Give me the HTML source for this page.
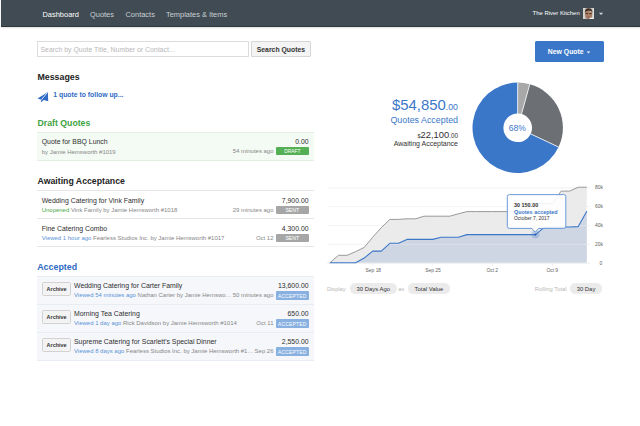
<!DOCTYPE html>
<html><head><meta charset="utf-8">
<style>
html,body{margin:0;padding:0;background:#fff;width:640px;height:426px;overflow:hidden;position:relative;font-family:"Liberation Sans",sans-serif;}
.t{position:absolute;white-space:nowrap;line-height:1;}
.b{font-weight:bold;}
#hdr{position:absolute;left:1px;top:0;width:639px;height:26px;background:#404b53;border-bottom:1px solid #2d373e;box-shadow:0 1px 1.5px rgba(0,0,0,0.12);}
.nav{color:#c9d0d4;font-size:7.45px;}
.box{position:absolute;}
.row{position:absolute;left:37px;width:276px;height:28px;}
.ttl{font-size:6.9px;color:#2e2e2e;}
.sub{font-size:5.97px;color:#878787;}
.amt{font-size:6.85px;color:#2e2e2e;text-align:right;}
.badge{position:absolute;left:276px;width:32.6px;height:8px;border-radius:1px;color:#fff;font-size:4.9px;text-align:center;line-height:8.3px;}
.arch{position:absolute;left:41.9px;width:29.4px;height:14px;border:0.8px solid #d2d2d2;background:#f3f3f3;border-radius:1.5px;box-sizing:border-box;font-size:5.45px;font-weight:bold;color:#333;text-align:center;line-height:13px;}
.pill{position:absolute;height:10.5px;border-radius:5.25px;background:#ebebeb;color:#333;font-size:5.9px;text-align:center;line-height:12.2px;}
.ax{font-size:4.9px;color:#5e5e5e;}
</style></head><body>
<div id="hdr"></div>
<div class="t nav" style="left:42.5px;top:11px;color:#fff">Dashboard</div>
<div class="t nav" style="left:90px;top:11px">Quotes</div>
<div class="t nav" style="left:125.5px;top:11px">Contacts</div>
<div class="t nav" style="left:166px;top:11px">Templates &amp; Items</div>
<div class="t" style="left:532.5px;top:10.5px;font-size:5.95px;color:#fff">The River Kitchen</div>
<svg class="box" style="left:582.9px;top:7.7px" width="11.5" height="11.2" viewBox="0 0 11.5 11.2"><rect width="11.5" height="11.2" fill="#bdbab3"/><rect x="0" y="0" width="2" height="11.2" fill="#d6d4ce"/><rect x="9.6" y="0" width="1.9" height="11.2" fill="#e0ded8"/><ellipse cx="5.6" cy="6.4" rx="3.5" ry="4.6" fill="#a97c64"/><path d="M1.8,5 Q1.6,0.2 5.6,0.2 Q9.6,0.2 9.4,5 Q8.8,2.2 5.8,2.4 Q2.6,2.4 1.8,5Z" fill="#3b2a22"/><rect x="2.6" y="5" width="2.2" height="1.1" fill="#4a3428"/><rect x="6.4" y="5" width="2.2" height="1.1" fill="#4a3428"/><ellipse cx="7.4" cy="3.8" rx="1.1" ry="0.8" fill="#d8b8a0"/><ellipse cx="5.6" cy="9" rx="1.6" ry="0.6" fill="#8a5a48"/><rect x="6.5" y="9.8" width="4" height="1.4" fill="#f2f2f2"/></svg>


<!-- search -->
<div class="box" style="left:37px;top:41px;width:211.6px;height:15.5px;border:1px solid #dcdcdc;box-sizing:border-box;background:#fff"></div>
<div class="t" style="left:40.5px;top:47.1px;font-size:6.9px;color:#b8b8b8">Search by Quote Title, Number or Contact…</div>
<div class="box" style="left:251px;top:41px;width:60px;height:15.5px;border:1px solid #d6d6d6;box-sizing:border-box;background:#f4f4f4;border-radius:1px"></div>
<div class="t b" style="left:256.7px;top:46.8px;font-size:6.86px;color:#333">Search Quotes</div>

<!-- new quote -->
<div class="box" style="left:535px;top:41px;width:68.5px;height:20.5px;background:#3b77c9;border-radius:1.5px"></div>
<div class="t b" style="left:547.8px;top:49.2px;font-size:6.87px;color:#fff">New Quote</div>
<svg class="box" style="left:0;top:0" width="640" height="70" viewBox="0 0 640 70"><polygon points="586.8,51.4 590.2,51.4 588.5,53.5" fill="#fff"/><polygon points="598.9,12.8 603.2,12.8 601.05,14.9" fill="#d0d5d8"/></svg>

<!-- messages -->
<div class="t b" style="left:37.5px;top:73px;font-size:8.8px;color:#222">Messages</div>
<svg class="box" style="left:0;top:0" width="60" height="110" viewBox="0 0 60 110"><path d="M47.9,91.9 L37.6,98.5 L41.2,99.7 L40.8,102.4 L43.7,100.1 L48.2,101.2 Z" fill="#2f6ac4"/><line x1="47.4" y1="92.6" x2="41.3" y2="99.9" stroke="#fff" stroke-width="0.8"/></svg>
<div class="t b" style="left:53.3px;top:91.7px;font-size:6.84px;color:#2f6ac4">1 quote to follow up...</div>

<!-- draft -->
<div class="t b" style="left:37.5px;top:118.8px;font-size:8.72px;color:#3fa33f">Draft Quotes</div>
<div class="box" style="left:37px;top:131.5px;width:276.5px;height:29px;background:#f4faf4;border-top:1px solid #e2f0e2;border-bottom:1px solid #e2f0e2;box-sizing:border-box"></div>
<div class="t ttl" style="left:41.7px;top:139.2px">Quote for BBQ Lunch</div>
<div class="t sub" style="left:41.7px;top:149.7px">by Jamie Hemsworth #1019</div>
<div class="t amt" style="right:331.5px;top:139.2px">0.00</div>
<div class="t sub" style="right:366.5px;top:149.3px">54 minutes ago</div>
<div class="badge" style="top:147.3px;height:8.2px;line-height:10.3px;background:#55b055">DRAFT</div>

<!-- awaiting -->
<div class="t b" style="left:37.5px;top:176.8px;font-size:8.74px;color:#222">Awaiting Acceptance</div>
<div class="box" style="left:37px;top:190px;width:276.5px;height:1px;background:#e6e6e6"></div>
<div class="t ttl" style="left:41.7px;top:197.9px">Wedding Catering for Vink Family</div>
<div class="t sub" style="left:41.7px;top:207.6px"><span style="color:#4aa84a">Unopened</span> Vink Family by Jamie Hemsworth #1018</div>
<div class="t amt" style="right:331.5px;top:197.9px">7,900.00</div>
<div class="t sub" style="right:366.5px;top:207.6px">29 minutes ago</div>
<div class="badge" style="top:206.1px;height:7.8px;line-height:8.1px;background:#a6a6a6;font-size:5.2px">SENT</div>
<div class="box" style="left:37px;top:218px;width:276.5px;height:1px;background:#e6e6e6"></div>
<div class="t ttl" style="left:41.7px;top:225.9px">Fine Catering Combo</div>
<div class="t sub" style="left:41.7px;top:235.6px"><span style="color:#5b93d6">Viewed 1 hour ago</span> Fearless Studios Inc. by Jamie Hemsworth #1017</div>
<div class="t amt" style="right:331.5px;top:225.9px">4,300.00</div>
<div class="t sub" style="right:366.5px;top:235.6px">Oct 12</div>
<div class="badge" style="top:234.2px;height:7.8px;line-height:8.1px;background:#a6a6a6;font-size:5.2px">SENT</div>
<div class="box" style="left:37px;top:246px;width:276.5px;height:1px;background:#e6e6e6"></div>

<!-- accepted -->
<div class="t b" style="left:37.2px;top:263px;font-size:8.9px;color:#2f6ac4">Accepted</div>
<div class="box" style="left:37px;top:276px;width:276.5px;height:84.5px;background:#f5f7fb;border-top:1px solid #e8edf4;border-bottom:1px solid #e8edf4;box-sizing:border-box"></div>
<div class="box" style="left:37px;top:303.7px;width:276.5px;height:1px;background:#e8edf4"></div>
<div class="box" style="left:37px;top:331.7px;width:276.5px;height:1px;background:#e8edf4"></div>

<div class="arch" style="top:282.4px">Archive</div>
<div class="t ttl" style="left:74px;top:283.3px">Wedding Catering for Carter Family</div>
<div class="t sub" style="left:74px;top:293.0px;width:158px;overflow:hidden;text-overflow:ellipsis"><span style="color:#5b93d6">Viewed 54 minutes ago</span> Nathan Carter by Jamie Hemsworth #1016</div>
<div class="t amt" style="right:331.5px;top:283.3px">13,600.00</div>
<div class="t sub" style="right:366.5px;top:293.0px">50 minutes ago</div>
<div class="badge" style="top:291.3px;height:8.4px;line-height:11px;background:#88b0e0;letter-spacing:0.25px">ACCEPTED</div>

<div class="arch" style="top:310.4px">Archive</div>
<div class="t ttl" style="left:74px;top:311.3px">Morning Tea Catering</div>
<div class="t sub" style="left:74px;top:321.0px"><span style="color:#5b93d6">Viewed 1 day ago</span> Rick Davidson by Jamie Hemsworth #1014</div>
<div class="t amt" style="right:331.5px;top:311.3px">650.00</div>
<div class="t sub" style="right:366.5px;top:321.0px">Oct 11</div>
<div class="badge" style="top:319.3px;height:8.4px;line-height:11px;background:#88b0e0;letter-spacing:0.25px">ACCEPTED</div>

<div class="arch" style="top:338.4px">Archive</div>
<div class="t ttl" style="left:74px;top:339.3px">Supreme Catering for Scarlett's Special Dinner</div>
<div class="t sub" style="left:74px;top:349.0px;width:180px;overflow:hidden;text-overflow:ellipsis"><span style="color:#5b93d6">Viewed 8 days ago</span> Fearless Studios Inc. by Jamie Hemsworth #1013</div>
<div class="t amt" style="right:331.5px;top:339.3px">2,550.00</div>
<div class="t sub" style="right:366.5px;top:349.0px">Sep 26</div>
<div class="badge" style="top:347.3px;height:8.4px;line-height:11px;background:#88b0e0;letter-spacing:0.25px">ACCEPTED</div>

<!-- stats -->
<div class="t" style="right:182px;top:98.2px;font-size:14.9px;color:#3b77c9">$54,850<span style="font-size:8.8px">.00</span></div>
<div class="t" style="right:182px;top:115.5px;font-size:8.9px;color:#3b77c9">Quotes Accepted</div>
<div class="t" style="right:182px;top:130px;font-size:9.4px;color:#333"><span style="font-size:5.6px">$</span>22,100<span style="font-size:6.3px">.00</span></div>
<div class="t" style="right:182px;top:139.7px;font-size:6.99px;color:#333">Awaiting Acceptance</div>

<!-- pie+chart -->
<svg class="box" style="left:0;top:0" width="640" height="426" viewBox="0 0 640 426">
<line x1="327.3" y1="187.9" x2="590" y2="187.9" stroke="#ececec" stroke-width="0.8"/>
<line x1="327.3" y1="206.6" x2="590" y2="206.6" stroke="#ececec" stroke-width="0.8"/>
<line x1="327.3" y1="225.6" x2="590" y2="225.6" stroke="#ececec" stroke-width="0.8"/>
<line x1="327.3" y1="244.4" x2="590" y2="244.4" stroke="#ececec" stroke-width="0.8"/>
<path d="M329.90,262.8 L329.90,262.80 338.46,255.30 347.03,255.30 355.59,251.60 364.15,247.50 372.72,237.20 381.28,227.70 389.84,219.40 398.41,219.40 406.97,218.80 415.53,218.80 424.10,216.20 432.66,216.20 441.22,216.20 449.79,216.20 458.35,213.80 466.91,211.60 475.48,211.60 484.04,211.60 492.60,211.60 501.17,211.60 509.73,211.60 518.29,211.60 526.86,203.60 535.42,203.60 543.98,203.60 552.55,203.60 561.11,191.10 569.67,191.10 578.24,187.20 586.80,187.20 L586.80,262.8 Z" fill="#e4e4e4" fill-opacity="0.75"/>
<path d="M329.90,262.8 L329.90,262.80 338.46,262.80 347.03,262.80 355.59,262.80 364.15,258.10 372.72,251.10 381.28,251.10 389.84,243.30 398.41,243.30 406.97,239.40 415.53,239.40 424.10,239.40 432.66,239.40 441.22,237.25 449.79,237.25 458.35,237.25 466.91,234.60 475.48,234.60 484.04,234.60 492.60,234.60 501.17,234.60 509.73,234.60 518.29,234.60 526.86,234.60 535.42,234.60 543.98,227.60 552.55,227.20 561.11,227.00 569.67,227.00 578.24,226.60 586.80,211.30 L586.80,262.8 Z" fill="#c5cfe0" fill-opacity="0.75"/>
<line x1="327.3" y1="263.2" x2="590" y2="263.2" stroke="#e6e6e6" stroke-width="0.8"/>
<line x1="327.3" y1="206.6" x2="587" y2="206.6" stroke="#ffffff" stroke-opacity="0.35" stroke-width="0.8"/>
<line x1="327.3" y1="225.6" x2="587" y2="225.6" stroke="#ffffff" stroke-opacity="0.35" stroke-width="0.8"/>
<line x1="327.3" y1="244.4" x2="587" y2="244.4" stroke="#ffffff" stroke-opacity="0.35" stroke-width="0.8"/>
<line x1="372.7" y1="263" x2="372.7" y2="265.5" stroke="#e0e0e0" stroke-width="0.6"/>
<line x1="432.2" y1="263" x2="432.2" y2="265.5" stroke="#e0e0e0" stroke-width="0.6"/>
<line x1="492.5" y1="263" x2="492.5" y2="265.5" stroke="#e0e0e0" stroke-width="0.6"/>
<line x1="552.5" y1="263" x2="552.5" y2="265.5" stroke="#e0e0e0" stroke-width="0.6"/>
<polyline points="329.90,262.80 338.46,255.30 347.03,255.30 355.59,251.60 364.15,247.50 372.72,237.20 381.28,227.70 389.84,219.40 398.41,219.40 406.97,218.80 415.53,218.80 424.10,216.20 432.66,216.20 441.22,216.20 449.79,216.20 458.35,213.80 466.91,211.60 475.48,211.60 484.04,211.60 492.60,211.60 501.17,211.60 509.73,211.60 518.29,211.60 526.86,203.60 535.42,203.60 543.98,203.60 552.55,203.60 561.11,191.10 569.67,191.10 578.24,187.20 586.80,187.20" fill="none" stroke="#8e8e8e" stroke-width="0.9" stroke-linejoin="round"/>
<polyline points="329.90,262.80 338.46,262.80 347.03,262.80 355.59,262.80 364.15,258.10 372.72,251.10 381.28,251.10 389.84,243.30 398.41,243.30 406.97,239.40 415.53,239.40 424.10,239.40 432.66,239.40 441.22,237.25 449.79,237.25 458.35,237.25 466.91,234.60 475.48,234.60 484.04,234.60 492.60,234.60 501.17,234.60 509.73,234.60 518.29,234.60 526.86,234.60 535.42,234.60 543.98,227.60 552.55,227.20 561.11,227.00 569.67,227.00 578.24,226.60 586.80,211.30" fill="none" stroke="#3b77c9" stroke-width="1.1" stroke-linejoin="round"/>
<circle cx="535.42" cy="234.6" r="4" fill="#3b77c9" fill-opacity="0.25"/>
<circle cx="535.42" cy="234.6" r="1.1" fill="#2a5fae"/>
<path d="M517.7 127.8 L517.70 82.60 A45.2 45.2 0 0 1 529.78 84.24 Z" fill="#a8a8a8"/>
<path d="M517.7 127.8 L529.78 84.24 A45.2 45.2 0 0 1 558.60 147.05 Z" fill="#6c6f73"/>
<path d="M517.7 127.8 L558.60 147.05 A45.2 45.2 0 1 1 517.70 82.60 Z" fill="#3b77c9"/>
<line x1="517.7" y1="127.8" x2="517.70" y2="82.60" stroke="#fff" stroke-width="0.8"/>
<line x1="517.7" y1="127.8" x2="529.78" y2="84.24" stroke="#fff" stroke-width="0.8"/>
<line x1="517.7" y1="127.8" x2="558.60" y2="147.05" stroke="#fff" stroke-width="0.8"/>
<circle cx="517.7" cy="127.8" r="14.3" fill="#fff"/>
<path d="M509.3,194.6 H563.8 Q565.8,194.6 565.8,196.6 V226.4 Q565.8,228.4 563.8,228.4 H538.6 L535.2,232.2 L531.8,228.4 H509.3 Q507.3,228.4 507.3,226.4 V196.6 Q507.3,194.6 509.3,194.6 Z" fill="#fff" fill-opacity="0.88" stroke="#5a8fd8" stroke-width="0.9"/>
</svg>
<div class="t" style="left:504.4px;top:123.5px;width:26px;text-align:center;font-size:8.6px;color:#3b77c9">68%</div>
<div class="t b" style="left:514px;top:202.9px;font-size:5.44px;color:#333">30 150.00</div>
<div class="t b" style="left:514px;top:210.1px;font-size:5.42px;color:#3b77c9">Quotes accepted</div>
<div class="t" style="left:514px;top:216.8px;font-size:4.95px;color:#333">October 7, 2017</div>
<div class="t ax" style="left:365.6px;top:268.8px">Sep 18</div>
<div class="t ax" style="left:425.2px;top:268.8px">Sep 25</div>
<div class="t ax" style="left:486.4px;top:268.8px">Oct 2</div>
<div class="t ax" style="left:546.4px;top:268.8px">Oct 9</div>
<div class="t ax" style="left:595.0px;top:185.7px">80k</div>
<div class="t ax" style="left:595.0px;top:204.8px">60k</div>
<div class="t ax" style="left:595.0px;top:224.0px">40k</div>
<div class="t ax" style="left:595.0px;top:242.8px">20k</div>
<div class="t ax" style="left:599.5px;top:261.6px">0</div>

<!-- controls -->
<div class="t" style="left:327px;top:286.6px;font-size:5.67px;color:#b8b8b8">Display</div>
<div class="pill" style="left:350px;top:283.1px;width:46.6px">30 Days Ago</div>
<div class="t" style="left:398.3px;top:286.6px;font-size:5.67px;color:#b8b8b8">as</div>
<div class="pill" style="left:408.2px;top:283.1px;width:41.5px">Total Value</div>
<div class="t" style="left:534.8px;top:286.6px;font-size:5.86px;color:#b8b8b8">Rolling Total</div>
<div class="pill" style="left:570px;top:283.1px;width:32px">30 Day</div>
</body></html>
